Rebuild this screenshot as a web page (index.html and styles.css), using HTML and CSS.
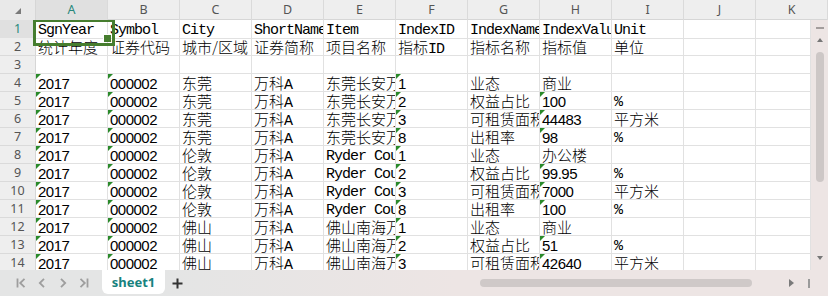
FILE: index.html
```html
<!DOCTYPE html>
<html>
<head>
<meta charset="utf-8">
<link rel="stylesheet" href="styles.css">
</head>
<body>
<div class="app">
  <div class="colhead">
    <div class="corner"></div>
    <div class="ch sel">A</div><div class="ch">B</div><div class="ch">C</div><div class="ch">D</div><div class="ch">E</div><div class="ch">F</div><div class="ch">G</div><div class="ch">H</div><div class="ch">I</div><div class="ch">J</div><div class="ch">K</div>
  </div>
  <div class="body">
    <div class="grid">
      <div class="row"><div class="rh sel">1</div><div class="c active">SgnYear</div><div class="c">Symbol</div><div class="c">City</div><div class="c">ShortName</div><div class="c">Item</div><div class="c">IndexID</div><div class="c">IndexName</div><div class="c">IndexValue</div><div class="c">Unit</div><div class="c"></div><div class="c"></div></div>
      <div class="row"><div class="rh">2</div><div class="c z">统计年度</div><div class="c z">证券代码</div><div class="c z">城市/区域</div><div class="c z">证券简称</div><div class="c z">项目名称</div><div class="c z">指标<span class="m">ID</span></div><div class="c z">指标名称</div><div class="c z">指标值</div><div class="c z">单位</div><div class="c"></div><div class="c"></div></div>
      <div class="row"><div class="rh">3</div><div class="c"></div><div class="c"></div><div class="c"></div><div class="c"></div><div class="c"></div><div class="c"></div><div class="c"></div><div class="c"></div><div class="c"></div><div class="c"></div><div class="c"></div></div>
      <div class="row"><div class="rh">4</div><div class="c n t">2017</div><div class="c n t">000002</div><div class="c z">东莞</div><div class="c z">万科<span class="m">A</span></div><div class="c z">东莞长安万科广场</div><div class="c n t">1</div><div class="c z">业态</div><div class="c z">商业</div><div class="c"></div><div class="c"></div><div class="c"></div></div>
      <div class="row"><div class="rh">5</div><div class="c n t">2017</div><div class="c n t">000002</div><div class="c z">东莞</div><div class="c z">万科<span class="m">A</span></div><div class="c z">东莞长安万科广场</div><div class="c n t">2</div><div class="c z">权益占比</div><div class="c n t">100</div><div class="c">%</div><div class="c"></div><div class="c"></div></div>
      <div class="row"><div class="rh">6</div><div class="c n t">2017</div><div class="c n t">000002</div><div class="c z">东莞</div><div class="c z">万科<span class="m">A</span></div><div class="c z">东莞长安万科广场</div><div class="c n t">3</div><div class="c z">可租赁面积</div><div class="c n t">44483</div><div class="c z">平方米</div><div class="c"></div><div class="c"></div></div>
      <div class="row"><div class="rh">7</div><div class="c n t">2017</div><div class="c n t">000002</div><div class="c z">东莞</div><div class="c z">万科<span class="m">A</span></div><div class="c z">东莞长安万科广场</div><div class="c n t">8</div><div class="c z">出租率</div><div class="c n t">98</div><div class="c">%</div><div class="c"></div><div class="c"></div></div>
      <div class="row"><div class="rh">8</div><div class="c n t">2017</div><div class="c n t">000002</div><div class="c z">伦敦</div><div class="c z">万科<span class="m">A</span></div><div class="c">Ryder Court</div><div class="c n t">1</div><div class="c z">业态</div><div class="c z">办公楼</div><div class="c"></div><div class="c"></div><div class="c"></div></div>
      <div class="row"><div class="rh">9</div><div class="c n t">2017</div><div class="c n t">000002</div><div class="c z">伦敦</div><div class="c z">万科<span class="m">A</span></div><div class="c">Ryder Court</div><div class="c n t">2</div><div class="c z">权益占比</div><div class="c n t">99.95</div><div class="c">%</div><div class="c"></div><div class="c"></div></div>
      <div class="row"><div class="rh">10</div><div class="c n t">2017</div><div class="c n t">000002</div><div class="c z">伦敦</div><div class="c z">万科<span class="m">A</span></div><div class="c">Ryder Court</div><div class="c n t">3</div><div class="c z">可租赁面积</div><div class="c n t">7000</div><div class="c z">平方米</div><div class="c"></div><div class="c"></div></div>
      <div class="row"><div class="rh">11</div><div class="c n t">2017</div><div class="c n t">000002</div><div class="c z">伦敦</div><div class="c z">万科<span class="m">A</span></div><div class="c">Ryder Court</div><div class="c n t">8</div><div class="c z">出租率</div><div class="c n t">100</div><div class="c">%</div><div class="c"></div><div class="c"></div></div>
      <div class="row"><div class="rh">12</div><div class="c n t">2017</div><div class="c n t">000002</div><div class="c z">佛山</div><div class="c z">万科<span class="m">A</span></div><div class="c z">佛山南海万科广场</div><div class="c n t">1</div><div class="c z">业态</div><div class="c z">商业</div><div class="c"></div><div class="c"></div><div class="c"></div></div>
      <div class="row"><div class="rh">13</div><div class="c n t">2017</div><div class="c n t">000002</div><div class="c z">佛山</div><div class="c z">万科<span class="m">A</span></div><div class="c z">佛山南海万科广场</div><div class="c n t">2</div><div class="c z">权益占比</div><div class="c n t">51</div><div class="c">%</div><div class="c"></div><div class="c"></div></div>
      <div class="row"><div class="rh">14</div><div class="c n t">2017</div><div class="c n t">000002</div><div class="c z">佛山</div><div class="c z">万科<span class="m">A</span></div><div class="c z">佛山南海万科广场</div><div class="c n t">3</div><div class="c z">可租赁面积</div><div class="c n t">42640</div><div class="c z">平方米</div><div class="c"></div><div class="c"></div></div>
    </div>
    <div class="vscroll">
      <div class="vdash"></div>
      <div class="tri-up"></div>
      <div class="vthumb"></div>
      <div class="vspace"></div>
      <div class="tri-down"></div>
    </div>
  </div>
  <div class="tabbar">
    <div class="nav">
      <span><svg width="10" height="10" viewBox="0 0 10 10"><path d="M1.5 0.5V9.5M8.5 0.8L4.2 5L8.5 9.2" fill="none" stroke="#9e9e9e" stroke-width="1.8"/></svg></span>
      <span><svg width="10" height="10" viewBox="0 0 10 10"><path d="M7 0.8L2.8 5L7 9.2" fill="none" stroke="#9e9e9e" stroke-width="1.8"/></svg></span>
      <span><svg width="10" height="10" viewBox="0 0 10 10"><path d="M3 0.8L7.2 5L3 9.2" fill="none" stroke="#9e9e9e" stroke-width="1.8"/></svg></span>
      <span><svg width="10" height="10" viewBox="0 0 10 10"><path d="M1.5 0.8L5.8 5L1.5 9.2M8.5 0.5V9.5" fill="none" stroke="#9e9e9e" stroke-width="1.8"/></svg></span>
    </div>
    <div class="tab">sheet1</div>
    <div class="plus"><svg width="11" height="11" viewBox="0 0 11 11"><path d="M5.5 0.5V10.5M0.5 5.5H10.5" stroke="#333" stroke-width="2"/></svg></div>
    <div class="hs"><div class="hthumb"></div></div>
    <div class="harrow"><svg width="5" height="8" viewBox="0 0 5 8"><path d="M0 0L5 4L0 8Z" fill="#7a7a7a"/></svg></div>
    <div class="hend"><div class="hline"></div></div>
  </div>
</div>
</body>
</html>
```
FILE: styles.css
```css
* { box-sizing: border-box; }
body { margin: 0; width: 828px; height: 296px; overflow: hidden; background: #fff; font-family: "Noto Sans", sans-serif; }
.app { display: flex; flex-direction: column; height: 296px; }

.colhead { display: grid; grid-template-columns: 36px repeat(11, 72px); height: 20px; background: #eeeeee; border-bottom: 1px solid #d6d6d6; }
.corner { position: relative; border-right: 1px solid #d6d6d6; background: #e9e9e9; }
.corner::after { content: ""; position: absolute; left: 15px; top: 8px; border-bottom: 6px solid #7a7a7a; border-left: 6px solid transparent; }
.ch { border-right: 1px solid #dadada; font-size: 12.5px; line-height: 20px; color: #555; text-align: center; }
.ch.sel { background: #e0e0e0; color: #27887b; }

.body { display: flex; height: 250px; }
.grid { width: 811px; overflow: hidden; }
.row { display: grid; grid-template-columns: 36px repeat(10, 72px) 55px; height: 18px; }
.rh { background: #eeeeee; border-right: 1px solid #d6d6d6; border-bottom: 1px solid #dadada; text-align: center; font-size: 12.5px; line-height: 17px; color: #555; }
.rh.sel { background: #e0e0e0; color: #27887b; }

.c { border-right: 1px solid #e1e1e1; border-bottom: 1px solid #e1e1e1; overflow: hidden; white-space: nowrap; padding: 3px 0 0 2px; font-family: "Liberation Mono", "Noto Sans CJK SC", monospace; font-size: 15px; line-height: 15px; letter-spacing: -1px; color: #000; }
.z { font-family: "Noto Sans CJK SC", sans-serif; font-weight: 300; letter-spacing: 0; line-height: 17px; padding-top: 0; }
.n { font-family: "Liberation Sans", sans-serif; letter-spacing: -0.5px; line-height: 17px; padding-top: 1px; }
.m { font-family: "Liberation Mono", monospace; font-weight: 400; letter-spacing: -1px; }
.t { position: relative; }
.t::before { content: ""; position: absolute; left: 0; top: 0; border-top: 5px solid #2a8a2a; border-right: 5px solid transparent; }

.active { position: relative; overflow: visible; z-index: 2; }
.active::after { content: ""; position: absolute; left: -3px; top: -1px; width: 76px; height: 21px; border: 3px solid #467d2e; }
.active::before { content: ""; position: absolute; left: 67px; top: 14px; width: 7px; height: 7px; background: #467d2e; border-left: 1px solid #fff; border-top: 1px solid #fff; z-index: 1; }

.vscroll { width: 17px; background: #ede5e4; display: flex; flex-direction: column; align-items: center; padding-top: 7px; }
.vdash { width: 8px; height: 2px; background: #a39d9c; }
.tri-up { margin-top: 9px; border-bottom: 4px solid #777; border-left: 3.5px solid transparent; border-right: 3.5px solid transparent; }
.vthumb { margin-top: 10px; width: 8px; height: 130px; border-radius: 4px; background: #cdc7c6; }
.vspace { flex: 1; }
.tri-down { margin-bottom: 10px; border-top: 4px solid #777; border-left: 3.5px solid transparent; border-right: 3.5px solid transparent; }

.tabbar { height: 26px; display: flex; align-items: stretch; background: linear-gradient(90deg, #e4e5e5 20%, #ede5e4 55%); }
.nav { display: flex; padding-left: 10px; }
.nav span { width: 21px; display: flex; align-items: center; justify-content: center; }
.tab { margin-left: 8px; width: 63px; height: 24px; background: #fff; border-radius: 0 0 6px 6px; color: #17827e; font: bold 13px "Noto Sans", sans-serif; display: flex; align-items: center; justify-content: center; }
.plus { width: 24px; display: flex; align-items: center; justify-content: center; }
.hs { flex: 1; display: flex; align-items: center; justify-content: flex-end; }
.hthumb { width: 272px; height: 8px; border-radius: 4px; background: #cfc9c8; }
.harrow { width: 48px; display: flex; align-items: center; justify-content: flex-end; padding-right: 6px; }
.hend { width: 28px; display: flex; align-items: center; padding-left: 8px; }
.hline { width: 2px; height: 9px; background: #9a9a9a; }
```
